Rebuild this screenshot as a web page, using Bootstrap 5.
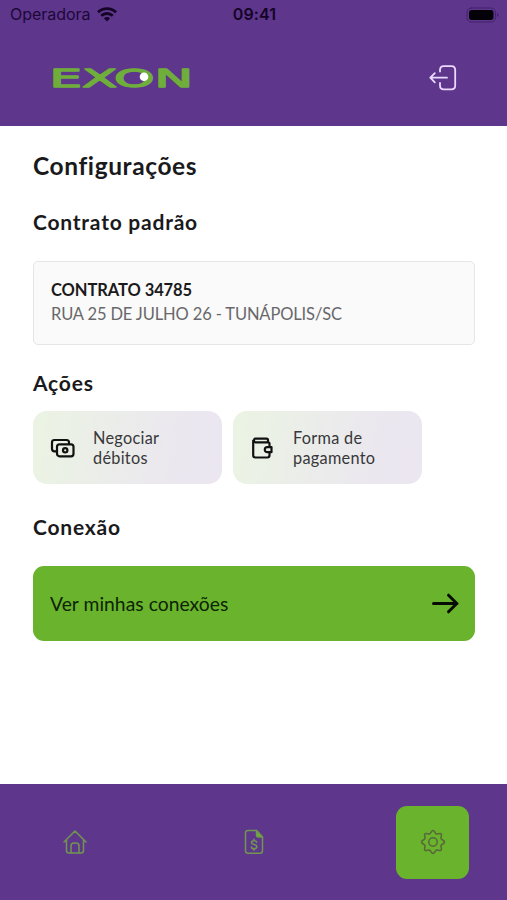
<!DOCTYPE html>
<html lang="pt-BR">
<head>
<meta charset="utf-8">
<meta name="viewport" content="width=device-width, initial-scale=1">
<title>Configurações</title>
<link href="https://cdn.jsdelivr.net/npm/bootstrap@5.3.0/dist/css/bootstrap.min.css" rel="stylesheet">
<style>
  body { font-family: Lato, "Open Sans", sans-serif; color: #1a1a1c; background: #fff; }
  .screen { height: 900px; overflow: hidden; }
  .brand-bg { background: #5e368c; }
  .top-area { height: 126px; }
  .status { height: 29px; padding: 0 8px 0 10px; font-family: Inter, sans-serif; font-size: 16px; line-height: 29px; color: #1d0838; }
  .status > * { flex: 1 1 0; }
  .carrier { letter-spacing: -.02px; }
  .signal { gap: 6px; }
  .clock { font-weight: 600; color: #140426; letter-spacing: .1px; }
  .brand-row { padding: 33px 50px 0 48px; }
  main { padding: 25px 32px 0 33px; }
  h1 { font-size: 24.5px; line-height: 30px; font-weight: 700; letter-spacing: .6px; }
  h2 { font-size: 21px; line-height: 26px; font-weight: 700; letter-spacing: .78px; }
  .title-contract { margin-top: 28px; }
  .title-actions { margin-top: 25px; }
  .title-connection { margin-top: 30px; }
  .contract { height: 84px; margin-top: 26px; padding: 16px 17px; background: #fafafa; border: 1px solid #e6e6e6; border-radius: 5px; font-size: 16.5px; line-height: 24px; }
  .contract-name { font-weight: 700; letter-spacing: -.08px; }
  .contract-address { color: #68686a; letter-spacing: -.13px; }
  .action-list { gap: 11px; margin-top: 15px; }
  .action { width: 189px; height: 73px; border-radius: 14px; padding-left: 17px; gap: 17px; background: linear-gradient(100deg, #ebf4e3 0%, #ebe7ef 75%, #ebe6f0 100%); font-size: 16.3px; line-height: 20px; letter-spacing: .28px; color: #38383a; text-decoration: none; }
  .connections { height: 75px; margin-top: 26px; padding: 1px 16px 0 17px; border-radius: 11px; background: #69b32d; color: #0d2405; font-size: 19.3px; letter-spacing: .04px; text-decoration: none; }
  .tabbar { height: 116px; padding: 0 38px; }
  .tab { width: 73px; height: 73px; border-radius: 11px; }
  .tab.active { background: #69b32d; }
  svg { display: block; flex: none; fill: none; stroke-linecap: round; stroke-linejoin: round; }
</style>
</head>
<body>
<div class="screen d-flex flex-column">
  <header class="brand-bg top-area">
    <div class="status d-flex align-items-center">
      <div class="signal d-flex align-items-center"><span class="carrier">Operadora</span>
        <svg width="20" height="15" viewBox="0 0 20 15" stroke="#140426" stroke-width="2.8" style="stroke-linecap:butt"><path d="M1 5.300a13 13 0 0 1 18 0M4.200 8.800a8.400 8.400 0 0 1 11.600 0"/><path d="M10 14.500l-3.100-3.200a4.600 4.600 0 0 1 6.200 0z" fill="#140426" stroke="none"/></svg>
      </div>
      <div class="clock text-center">09:41</div>
      <div class="d-flex justify-content-end">
        <svg width="33" height="16" viewBox="0 0 33 16"><rect x="1" y="1" width="28.500" height="14" rx="4.300" stroke="#42216a"/><rect x="3" y="3" width="24.500" height="10" rx="2.700" fill="#050109"/><path d="M31 6v4q1.500-.6 1.500-2T31 6z" fill="#42216a"/></svg>
      </div>
    </div>
    <div class="brand-row d-flex justify-content-between align-items-center">
      <svg width="150" height="32" viewBox="0 0 150 32" role="img" aria-label="EXON">
        <text x="1.500" y="24.500" textLength="143.500" lengthAdjust="spacingAndGlyphs" font-family="DejaVu Sans" font-size="25.500" fill="#6fae3b" stroke="#6fae3b" stroke-width="1.300">EXON</text>
        <circle cx="96" cy="14.700" r="4.300" fill="#fff"/>
      </svg>
      <svg width="28" height="26" viewBox="0 0 28 26" stroke="#ecd9ff" stroke-width="1.800"><path d="M11 6.500V5q0-3.800 3.800-3.800h7.600q3.800 0 3.800 3.800v15.500q0 3.800-3.800 3.800h-7.600Q11 24.300 11 20.500V18M18 12.700H1.300M5.800 8.200L1.300 12.700l4.500 4.600"/></svg>
    </div>
  </header>

  <main class="flex-grow-1">
    <h1 class="mb-0">Configurações</h1>
    <h2 class="mb-0 title-contract">Contrato padrão</h2>
    <div class="contract">
      <div class="contract-name">CONTRATO 34785</div>
      <div class="contract-address">RUA 25 DE JULHO 26 - TUNÁPOLIS/SC</div>
    </div>
    <h2 class="mb-0 title-actions">Ações</h2>
    <div class="d-flex action-list">
      <a href="#" class="action d-flex align-items-center">
        <svg width="26" height="26" viewBox="0 0 26 26" stroke="#111" stroke-width="2.200"><path d="M7 16.300H4.500Q2 16.300 2 13.800V7.500Q2 5 4.500 5h12Q19 5 19 7.500V9"/><rect x="7" y="9.300" width="16.500" height="12" rx="2.500"/><circle cx="15.200" cy="15.300" r="2.200"/></svg>
        <span>Negociar<br>débitos</span>
      </a>
      <a href="#" class="action d-flex align-items-center">
        <svg width="26" height="26" viewBox="0 0 26 26" stroke="#111" stroke-width="2.200"><path d="M19.500 11V8.600Q19.500 7.300 18.200 7.300H5.200A2 2 0 0 1 5.200 3.600H16.500Q18 3.600 18 5.100V7M3.200 5.500v14.800q0 2.200 2.200 2.200h12q2.100 0 2.100-2.200V18.500M21.500 12.200v5M21.500 12.200h-4.200a2.500 2.500 0 0 0 0 5h4.200"/></svg>
        <span>Forma de<br>pagamento</span>
      </a>
    </div>
    <h2 class="mb-0 title-connection">Conexão</h2>
    <a href="#" class="connections d-flex justify-content-between align-items-center">
      <span>Ver minhas conexões</span>
      <svg width="27" height="22" viewBox="0 0 27 22" stroke="#080d04" stroke-width="3"><path d="M1.500 10.500h23.500M16.500 2.200l8.300 8.300-8.300 8.300"/></svg>
    </a>
  </main>

  <nav class="brand-bg tabbar d-flex justify-content-between align-items-center">
    <a href="#" class="tab d-flex justify-content-center align-items-center" aria-label="Início">
      <svg width="26" height="26" viewBox="0 0 26 26" stroke="#71964f" stroke-width="1.500"><path d="M2 13L13 2l11 11M4.500 11v10.500q0 2.500 2.500 2.500h12q2.500 0 2.500-2.500V11M9 24v-7q0-3 3-3h2q3 0 3 3v7"/></svg>
    </a>
    <a href="#" class="tab d-flex justify-content-center align-items-center" aria-label="Faturas">
      <svg width="20" height="26" viewBox="0 0 20 26" stroke="#71964f" stroke-width="1.500"><path d="M12.500 1.500H4Q1.500 1.500 1.500 4v17.500Q1.500 24.300 4 24.300h12q2.500 0 2.500-2.800V8z"/><path d="M12.500 1.500V6q0 2 2 2h4z" fill="#69b32d"/><path d="M12.700 13.200q-.4-1.500-2.700-1.500-2.500 0-2.500 1.900 0 1.500 2.600 2 2.700.5 2.700 2.200 0 1.900-2.700 1.900-2.500 0-2.800-1.700M10 10.200v1.500M10 19.700v1.500"/></svg>
    </a>
    <a href="#" class="tab active d-flex justify-content-center align-items-center" aria-label="Configurações">
      <svg width="26" height="26" viewBox="0 0 26 26" stroke="#58673a" stroke-width="1.500"><circle cx="13" cy="13" r="4.200"/><path d="M13 1.500C14.800 1.500 15 4.500 16.500 5S19.800 3.600 21.100 4.900 20.400 8 21 9.500 24.500 11.200 24.500 13 21.600 15 21 16.500 22.400 19.800 21.100 21.100 18 20.400 16.500 21 14.800 24.500 13 24.500 11 21.600 9.500 21 6.200 22.400 4.900 21.100 5.600 18 5 16.500 1.500 14.800 1.500 13 4.400 11 5 9.500 3.600 6.200 4.900 4.900 8 5.600 9.500 5 11.200 1.500 13 1.500z"/></svg>
    </a>
  </nav>
</div>
<script src="https://cdn.jsdelivr.net/npm/bootstrap@5.3.0/dist/js/bootstrap.bundle.min.js"></script>
</body>
</html>
